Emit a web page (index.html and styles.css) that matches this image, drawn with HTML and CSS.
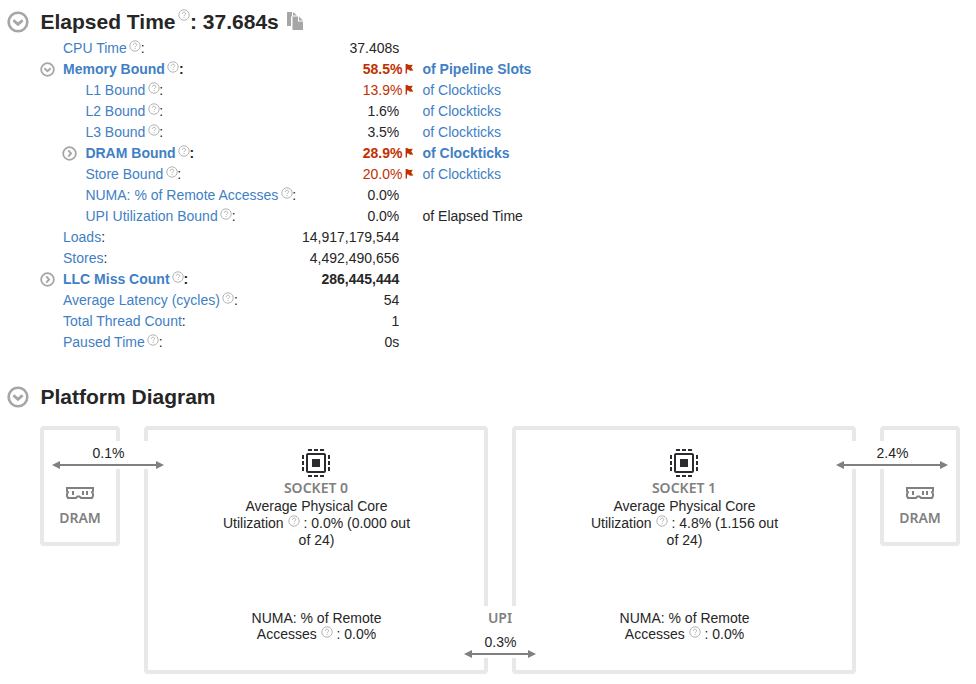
FILE: index.html
```html
<!DOCTYPE html>
<html lang="en">
<head>
<meta charset="utf-8">
<title>Summary</title>
<link rel="stylesheet" href="styles.css">
</head>
<body>
<svg class="defs" aria-hidden="true">
  <symbol id="help" viewBox="0 0 12 12"><circle cx="6" cy="6" r="5.2" fill="none" stroke="#b4b4b4"/><path d="M4.3 4.9C4.3 2.7 7.7 2.7 7.7 4.7C7.7 5.9 6.1 5.8 6.1 7.2M6.1 8.1V9.1" fill="none" stroke="#b4b4b4"/></symbol>
  <symbol id="down" viewBox="0 0 22 22"><circle cx="11" cy="11" r="9.3" fill="none" stroke="#a6a6a6" stroke-width="2.6"/><path d="M6.4 9.2L11 13.4L15.6 9.2" fill="none" stroke="#a6a6a6" stroke-width="2.8"/></symbol>
  <symbol id="right" viewBox="0 0 22 22"><circle cx="11" cy="11" r="9.3" fill="none" stroke="#a6a6a6" stroke-width="2.6"/><path d="M9.2 6.4L13.4 11L9.2 15.6" fill="none" stroke="#a6a6a6" stroke-width="2.8"/></symbol>
  <symbol id="flag" viewBox="0 0 9 10"><path d="M0.6 0H2L4 1L7.8 0.8L6.2 3.6L8.4 6.6L5 6.8L3.4 5.6L2 5.6V9.6H0.6Z" fill="#c13000"/></symbol>
  <symbol id="chip" viewBox="0 0 28 28"><rect x="5" y="5" width="18" height="18" rx="1" fill="none" stroke="#2b2c30" stroke-width="2"/><path d="M10 10H18V18H10Z" fill="#2b2c30"/><path d="M6 1H22M6 27H22" fill="none" stroke="#2b2c30" stroke-width="2" stroke-dasharray="4 2"/><path d="M1 6V22M27 6V22" fill="none" stroke="#2b2c30" stroke-width="2" stroke-dasharray="4 2"/></symbol>
  <symbol id="dimm" viewBox="0 0 28 12"><path d="M1 1H27V4L26 5L27 7V9L26 11H15L13.5 9.4H11.5L10 11H2L1 9V7L2 5L1 4Z" fill="none" stroke="#808080" stroke-width="2"/><path d="M7 4V8M17 4V8M21 4V8" stroke="#808080" stroke-width="2"/></symbol>
  <symbol id="arrow-long" viewBox="0 0 112 8"><path d="M0 4L8 0V3H104V0L112 4L104 8V5H8V8Z" fill="#808080"/></symbol>
  <symbol id="arrow-short" viewBox="0 0 72 8"><path d="M0 4L8 0V3H64V0L72 4L64 8V5H8V8Z" fill="#808080"/></symbol>
</svg>

<h1 class="heading"><svg class="toggle"><use href="#down"/></svg><span>Elapsed Time<svg class="help"><use href="#help"/></svg>: 37.684s</span><svg class="copy" viewBox="0 0 17 18"><path d="M0 0H5V4.5H4V14H0ZM6 0L10 3.5H6Z" fill="#a6a6a6"/><path d="M5.5 4.5H11V9.5H16V18H5.5ZM12 4.5L16 8.5H12Z" fill="#a6a6a6"/></svg></h1>

<div class="metrics">
  <div class="row"><div class="name"><a>CPU Time</a><svg class="help"><use href="#help"/></svg>:</div><div class="value">37.408s</div></div>
  <div class="row bold"><div class="name"><svg class="toggle"><use href="#down"/></svg><a>Memory Bound</a><svg class="help"><use href="#help"/></svg>:</div><div class="value hot">58.5%<svg class="flag"><use href="#flag"/></svg></div><a>of Pipeline Slots</a></div>
  <div class="row"><div class="name sub"><a>L1 Bound</a><svg class="help"><use href="#help"/></svg>:</div><div class="value hot">13.9%<svg class="flag"><use href="#flag"/></svg></div><a>of Clockticks</a></div>
  <div class="row"><div class="name sub"><a>L2 Bound</a><svg class="help"><use href="#help"/></svg>:</div><div class="value">1.6%</div><a>of Clockticks</a></div>
  <div class="row"><div class="name sub"><a>L3 Bound</a><svg class="help"><use href="#help"/></svg>:</div><div class="value">3.5%</div><a>of Clockticks</a></div>
  <div class="row bold"><div class="name sub"><svg class="toggle"><use href="#right"/></svg><a>DRAM Bound</a><svg class="help"><use href="#help"/></svg>:</div><div class="value hot">28.9%<svg class="flag"><use href="#flag"/></svg></div><a>of Clockticks</a></div>
  <div class="row"><div class="name sub"><a>Store Bound</a><svg class="help"><use href="#help"/></svg>:</div><div class="value hot">20.0%<svg class="flag"><use href="#flag"/></svg></div><a>of Clockticks</a></div>
  <div class="row"><div class="name sub"><a>NUMA: % of Remote Accesses</a><svg class="help"><use href="#help"/></svg>:</div><div class="value">0.0%</div></div>
  <div class="row"><div class="name sub"><a>UPI Utilization Bound</a><svg class="help"><use href="#help"/></svg>:</div><div class="value">0.0%</div><span>of Elapsed Time</span></div>
  <div class="row"><div class="name"><a>Loads</a>:</div><div class="value">14,917,179,544</div></div>
  <div class="row"><div class="name"><a>Stores</a>:</div><div class="value">4,492,490,656</div></div>
  <div class="row bold"><div class="name"><svg class="toggle"><use href="#right"/></svg><a>LLC Miss Count</a><svg class="help"><use href="#help"/></svg>:</div><div class="value">286,445,444</div></div>
  <div class="row"><div class="name"><a>Average Latency (cycles)</a><svg class="help"><use href="#help"/></svg>:</div><div class="value">54</div></div>
  <div class="row"><div class="name"><a>Total Thread Count</a>:</div><div class="value">1</div></div>
  <div class="row"><div class="name"><a>Paused Time</a><svg class="help"><use href="#help"/></svg>:</div><div class="value">0s</div></div>
</div>

<h1 class="heading second"><svg class="toggle"><use href="#down"/></svg><span>Platform Diagram</span></h1>

<div class="diagram">
  <div class="dram"><svg class="dimm"><use href="#dimm"/></svg><div class="tag">DRAM</div></div>
  <div class="socket">
    <svg class="chip"><use href="#chip"/></svg>
    <div class="tag">SOCKET 0</div>
    <div class="usage">Average Physical Core<br>Utilization <svg class="help"><use href="#help"/></svg> : 0.0% (0.000 out<br>of 24)</div>
    <div class="numa">NUMA: % of Remote<br>Accesses <svg class="help"><use href="#help"/></svg> : 0.0%</div>
  </div>
  <div class="socket">
    <svg class="chip"><use href="#chip"/></svg>
    <div class="tag">SOCKET 1</div>
    <div class="usage">Average Physical Core<br>Utilization <svg class="help"><use href="#help"/></svg> : 4.8% (1.156 out<br>of 24)</div>
    <div class="numa">NUMA: % of Remote<br>Accesses <svg class="help"><use href="#help"/></svg> : 0.0%</div>
  </div>
  <div class="dram"><svg class="dimm"><use href="#dimm"/></svg><div class="tag">DRAM</div></div>
  <div class="link left"><span>0.1%</span><svg><use href="#arrow-long"/></svg></div>
  <div class="link right"><span>2.4%</span><svg><use href="#arrow-long"/></svg></div>
  <div class="link upi"><div class="tag">UPI</div><span>0.3%</span><svg><use href="#arrow-short"/></svg></div>
</div>
</body>
</html>
```
FILE: styles.css
```css
* { box-sizing: border-box; }
body {
  margin: 0;
  height: 684px;
  overflow: hidden;
  background: #fff;
  color: #262626;
  font: 14px/21px "Liberation Sans", Arial, sans-serif;
}
svg { flex: none; }
.defs { display: none; }
.heading {
  display: flex;
  align-items: center;
  height: 38px;
  margin: 0;
  padding: 5px 0 0 7px;
  font-size: 21px;
  line-height: 30px;
  white-space: pre;
}
.heading .toggle { width: 22px; height: 22px; margin-right: 11.5px; }
.heading .help { width: 12px; height: 12px; margin: 0 0 0 2.5px; vertical-align: 8px; }
.copy { width: 17px; height: 18px; margin-left: 8.5px; margin-top: -2px; }
.second { margin-top: 22px; }

.row {
  display: grid;
  grid-template-columns: 239px 112px 1fr;
  height: 21px;
  padding-left: 63px;
}
.bold { font-weight: bold; }
.row a { color: #3f80c5; }
.name { white-space: nowrap; }
.sub { padding-left: 22.4px; }
.name .toggle {
  width: 15px;
  height: 15px;
  margin: 0 8px 0 -23px;
  vertical-align: -3px;
}
.help { width: 12px; height: 12px; margin: 0 -0.5px 0 2.5px; vertical-align: 1px; }
.value { padding-right: 14.7px; text-align: right; }
.value.hot { padding-right: 0.5px; color: #c13000; }
.flag { width: 9px; height: 10px; margin-left: 2px; }
.row > :nth-child(3) { padding-left: 8.5px; }

.diagram {
  position: relative;
  display: flex;
  align-items: flex-start;
  gap: 24px;
  margin: 13px 0 0 40px;
  width: 920px;
}
.dram, .socket {
  display: flex;
  flex-direction: column;
  align-items: center;
  border: 4px solid #e8e8e8;
  border-radius: 4px;
}
.dram { width: 80px; height: 120px; padding-top: 57px; }
.socket { width: 344px; height: 248px; padding-top: 19px; text-align: center; }
.dimm { width: 28px; height: 12px; margin-bottom: 9px; }
.chip { width: 28px; height: 28px; margin-bottom: 1px; }
.tag {
  color: #808080;
  font: 600 14px/20px "Noto Sans", sans-serif;
}
.usage, .numa { padding-left: 1px; }
.usage { line-height: 17px; height: 112px; }
.numa { line-height: 16px; }
.diagram .help { margin: 0; }
.link {
  position: absolute;
  display: flex;
  flex-direction: column;
  align-items: center;
  width: 112px;
  height: 28px;
  padding-top: 4px;
  line-height: 16px;
  background: #fff;
}
.link span { padding-left: 1px; }
.link svg { width: 112px; height: 8px; }
.left { left: 12px; top: 15px; }
.right { left: 796px; top: 15px; }
.upi { left: 424px; top: 180px; width: 72px; height: 52px; padding-top: 2px; }
.upi .tag { margin-bottom: 6px; }
.upi svg { width: 72px; }
```
